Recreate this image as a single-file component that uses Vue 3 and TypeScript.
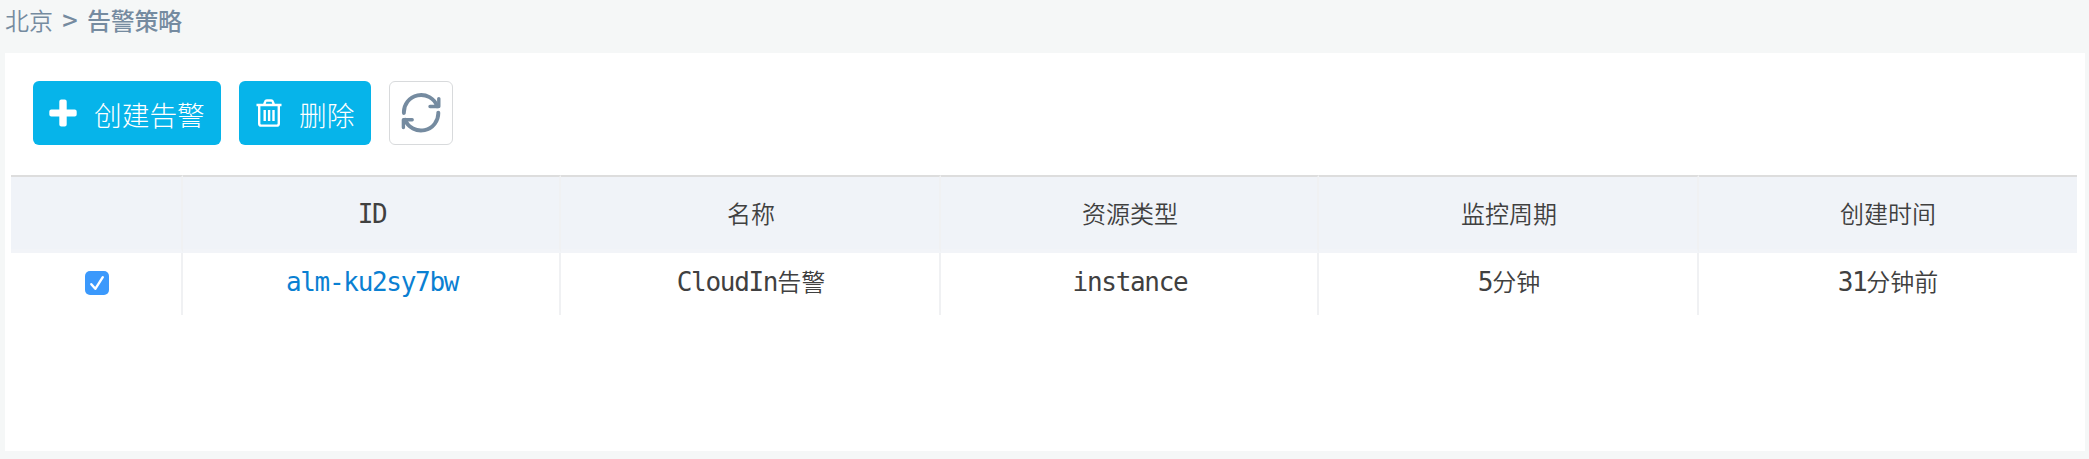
<script setup lang="ts">
import { ref } from 'vue'

interface Policy {
  id: string
  name: [string, string]
  resource: string
  period: [string, string]
  created: [string, string]
}

const headers: string[] = ['名称', '资源类型', '监控周期', '创建时间']

const policies: Policy[] = [
  {
    id: 'alm-ku2sy7bw',
    name: ['CloudIn', '告警'],
    resource: 'instance',
    period: ['5', '分钟'],
    created: ['31', '分钟前'],
  },
]

const selected = ref<string[]>(['alm-ku2sy7bw'])

function toggle(id: string): void {
  selected.value = selected.value.includes(id)
    ? selected.value.filter((item) => item !== id)
    : [...selected.value, id]
}
</script>

<template>
  <div class="page">
    <nav class="breadcrumb">
      <span>北京</span>
      <span class="separator">&gt;</span>
      <span class="current">告警策略</span>
    </nav>
    <main class="panel">
      <div class="toolbar">
        <button class="btn create" type="button">
          <svg width="28" height="28" viewBox="0 0 28 28">
            <path
              fill="#fff"
              d="M12.3 .5h3.4a2 2 0 0 1 2 2v8h8a2 2 0 0 1 2 2v3a2 2 0 0 1-2 2h-8v8a2 2 0 0 1-2 2h-3.4a2 2 0 0 1-2-2v-8h-8a2 2 0 0 1-2-2v-3a2 2 0 0 1 2-2h8v-8a2 2 0 0 1 2-2z"
            />
          </svg>
          <span>创建告警</span>
        </button>
        <button class="btn remove" type="button">
          <svg width="26" height="28" viewBox="0 0 26 28" fill="none" stroke="#fff" stroke-width="2.4">
            <path d="M.5 6h25M8 6l1.3-3.6Q9.6 1.5 10.8 1.5h4.4q1.2 0 1.5.9L18 6" />
            <path d="M3.2 6v18.4Q3.2 26.6 5.2 26.6h15.6q2 0 2-2.2V6M8.7 11v11M13.1 11v11M17.5 11v11" />
          </svg>
          <span>删除</span>
        </button>
        <button class="btn refresh" type="button" aria-label="刷新">
          <svg width="40" height="40" viewBox="0 0 40 40" fill="none" stroke="#758ba0" stroke-width="3.9" stroke-linejoin="round">
            <path stroke-linecap="round" d="M2.9 20A17.2 17.2 0 0 1 36.2 13.2" />
            <path stroke-linecap="round" d="M37.3 19.6A17.3 17.3 0 0 1 4 26.8" />
            <path stroke-linecap="round" stroke-width="3.4" d="M37.8 5.6v7.9h-8.8M2.4 34.6v-7.9h8.8" />
          </svg>
        </button>
      </div>
      <table class="grid">
        <colgroup>
          <col class="col-check" />
          <col class="col-odd" />
          <col class="col-even" />
          <col class="col-odd" />
          <col class="col-even" />
          <col class="col-odd" />
        </colgroup>
        <thead>
          <tr>
            <th></th>
            <th><span class="mono">ID</span></th>
            <th v-for="header in headers" :key="header">{{ header }}</th>
          </tr>
        </thead>
        <tbody>
          <tr v-for="policy in policies" :key="policy.id">
            <td>
              <span
                class="checkbox"
                :class="{ checked: selected.includes(policy.id) }"
                role="checkbox"
                :aria-checked="selected.includes(policy.id)"
                @click="toggle(policy.id)"
              >
                <svg width="24" height="24" viewBox="0 0 24 24" fill="none">
                  <path d="M6.3 13.2l4 4.6 7.5-11.6" stroke="#fff" stroke-width="2.4" stroke-linecap="round" stroke-linejoin="round" />
                </svg>
              </span>
            </td>
            <td><a class="mono link">{{ policy.id }}</a></td>
            <td><span class="mono">{{ policy.name[0] }}</span>{{ policy.name[1] }}</td>
            <td><span class="mono">{{ policy.resource }}</span></td>
            <td><span class="mono">{{ policy.period[0] }}</span>{{ policy.period[1] }}</td>
            <td><span class="mono">{{ policy.created[0] }}</span>{{ policy.created[1] }}</td>
          </tr>
        </tbody>
      </table>
    </main>
  </div>
</template>

<style>
body {
  margin: 0;
  background: #f5f7f7;
}
</style>

<style scoped>
.page {
  box-sizing: border-box;
  width: 100%;
  height: 459px;
  padding: 0 4px 8px 5px;
  display: flex;
  flex-direction: column;
  font-family: 'Noto Sans CJK SC', sans-serif;
  font-size: 24px;
  color: #404040;
  background: #f5f7f7;
}

.breadcrumb {
  display: flex;
  height: 53px;
  flex: none;
  line-height: 40px;
  color: #758ba0;
  font-weight: 350;
}

.separator {
  width: 34px;
  text-align: center;
  font-size: 27px;
  font-weight: 500;
}

.current {
  font-weight: 500;
  letter-spacing: -0.3px;
}

.panel {
  flex: 1;
  background: #fff;
}

.toolbar {
  display: flex;
  gap: 18px;
  padding: 28px 28px 30px;
}

.btn {
  box-sizing: border-box;
  height: 64px;
  display: flex;
  align-items: center;
  padding: 0;
  border: 0;
  border-radius: 6px;
  background: #06b4ea;
  color: #fff;
  font: 300 27.7px/64px 'Noto Sans CJK SC', sans-serif;
}

.btn svg {
  flex: none;
}

.btn span {
  padding-top: 1px;
}

.create {
  width: 188px;
  padding-left: 16px;
  gap: 17px;
}

.remove {
  width: 132px;
  padding-left: 17px;
  gap: 17px;
}

.refresh {
  width: 64px;
  justify-content: center;
  border: 1px solid #d8dadc;
  background: #fff;
}

.grid {
  width: 2066px;
  margin-left: 6px;
  table-layout: fixed;
  border-collapse: separate;
  border-spacing: 0;
}

.col-check {
  width: 172px;
}

.col-odd {
  width: 378px;
}

.col-even {
  width: 380px;
}

th,
td {
  box-sizing: border-box;
  padding: 0 0 0 2px;
  text-align: center;
  font-weight: 350;
  line-height: 36px;
  border-right: 2px solid #f0f1f3;
}

th {
  height: 78px;
  background: #f0f3f8;
  border-top: 2px solid #ddd;
  border-bottom: 4px solid #f2f4f8;
}

td {
  height: 62px;
  padding-bottom: 6px;
}

th:last-child,
td:last-child {
  border-right: 0;
  padding-left: 0;
}

.mono {
  font-family: 'DejaVu Sans Mono', monospace;
  font-size: 26px;
  font-weight: 400;
  letter-spacing: -1.3px;
  line-height: 1;
}

.link {
  color: #0a80d2;
}

.checkbox {
  display: block;
  box-sizing: border-box;
  width: 24px;
  height: 24px;
  margin: 4px auto 0;
  border-radius: 5px;
  background: #e4e6e8;
}

.checkbox svg {
  display: block;
  visibility: hidden;
}

.checked {
  background: #3b99fc;
}

.checked svg {
  visibility: visible;
}
</style>
